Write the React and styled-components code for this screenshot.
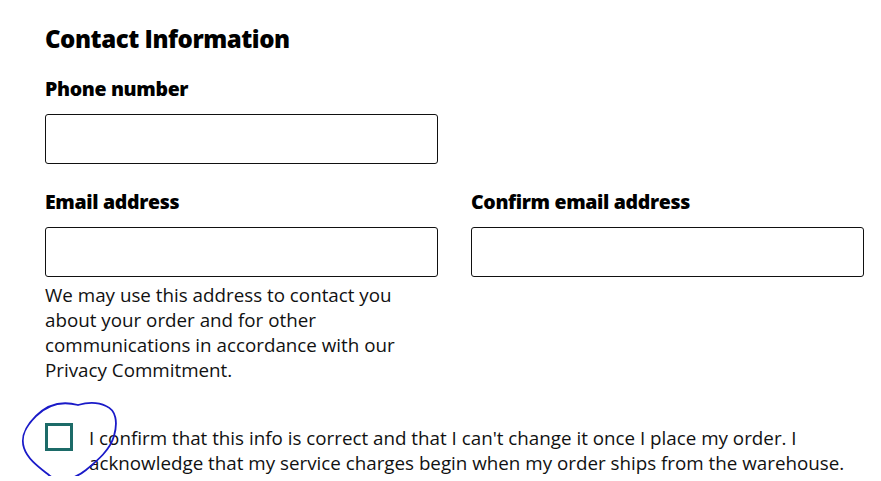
import React from "react";
import styled, { createGlobalStyle } from "styled-components";

const Global = createGlobalStyle`
  html, body { margin: 0; padding: 0; background: #fff; }
  body { font-family: "Open Sans", "Noto Sans", sans-serif; color: #111; }
`;

const Page = styled.main`
  position: relative;
  padding: 23px 17px 0 45px;
  width: 881px;
  box-sizing: border-box;
`;

const Heading = styled.h2`
  margin: 0;
  font-family: "Open Sans", "Noto Sans", sans-serif;
  font-weight: 800;
  font-size: 24px;
  letter-spacing: -0.45px;
  line-height: 32px;
  color: #000;
`;

const Row = styled.div`
  display: grid;
  grid-template-columns: 393px 393px;
  column-gap: 33px;
  margin-top: ${(p) => p.$top}px;
`;

const Field = styled.div`
  display: flex;
  flex-direction: column;
`;

const Label = styled.label`
  font-family: "Open Sans", "Noto Sans", sans-serif;
  font-weight: 800;
  font-size: 19.5px;
  letter-spacing: -0.35px;
  line-height: 24px;
  color: #000;
  margin-bottom: 13px;
`;

const Input = styled.input`
  box-sizing: border-box;
  height: 50px;
  width: 100%;
  border: 1px solid #111;
  border-radius: 3px;
  background: #fff;
  margin: 0;
  padding: 0 12px;
  font-size: 18px;
`;

const Help = styled.p`
  margin: 6px 0 0;
  font-size: 18.8px;
  line-height: 25px;
  color: #111;
  max-width: 365px;
`;

const Consent = styled.label`
  display: flex;
  align-items: flex-start;
  gap: 16px;
  margin-top: 43px;
  font-size: 18.8px;
  line-height: 25px;
  color: #111;
`;

const Box = styled.span`
  flex: none;
  box-sizing: border-box;
  width: 28px;
  height: 28px;
  border: 3px solid #1c6b68;
  margin-top: -3px;
  background: #fff;
`;

const Scribble = styled.svg`
  position: absolute;
  left: 18px;
  top: 398px;
  width: 105px;
  height: 84px;
  pointer-events: none;
`;

export default function App() {
  return (
    <>
      <Global />
      <Page>
        <Heading>Contact Information</Heading>
        <Row $top={22}>
          <Field>
            <Label>Phone number</Label>
            <Input type="tel" />
          </Field>
        </Row>
        <Row $top={26}>
          <Field>
            <Label>Email address</Label>
            <Input type="email" />
            <Help>
              We may use this address to contact you about your order and for
              other communications in accordance with our Privacy Commitment.
            </Help>
          </Field>
          <Field>
            <Label>Confirm email address</Label>
            <Input type="email" />
          </Field>
        </Row>
        <Consent>
          <Box />
          <span>
            I confirm that this info is correct and that I can't change it once I
            place my order. I acknowledge that my service charges begin when my
            order ships from the warehouse.
          </span>
        </Consent>
        <Scribble viewBox="0 0 105 84">
          <path
            d="M60 7 C45 3 30 6 18 18 C8 28 2 38 6 50 C10 62 22 70 32 78 C42 86 58 80 68 72 C80 62 92 52 96 38 C100 24 98 12 88 8 C80 4 70 4 60 7"
            fill="none"
            stroke="#1a1ac8"
            strokeWidth="1.8"
            strokeLinecap="round"
          />
        </Scribble>
      </Page>
    </>
  );
}
